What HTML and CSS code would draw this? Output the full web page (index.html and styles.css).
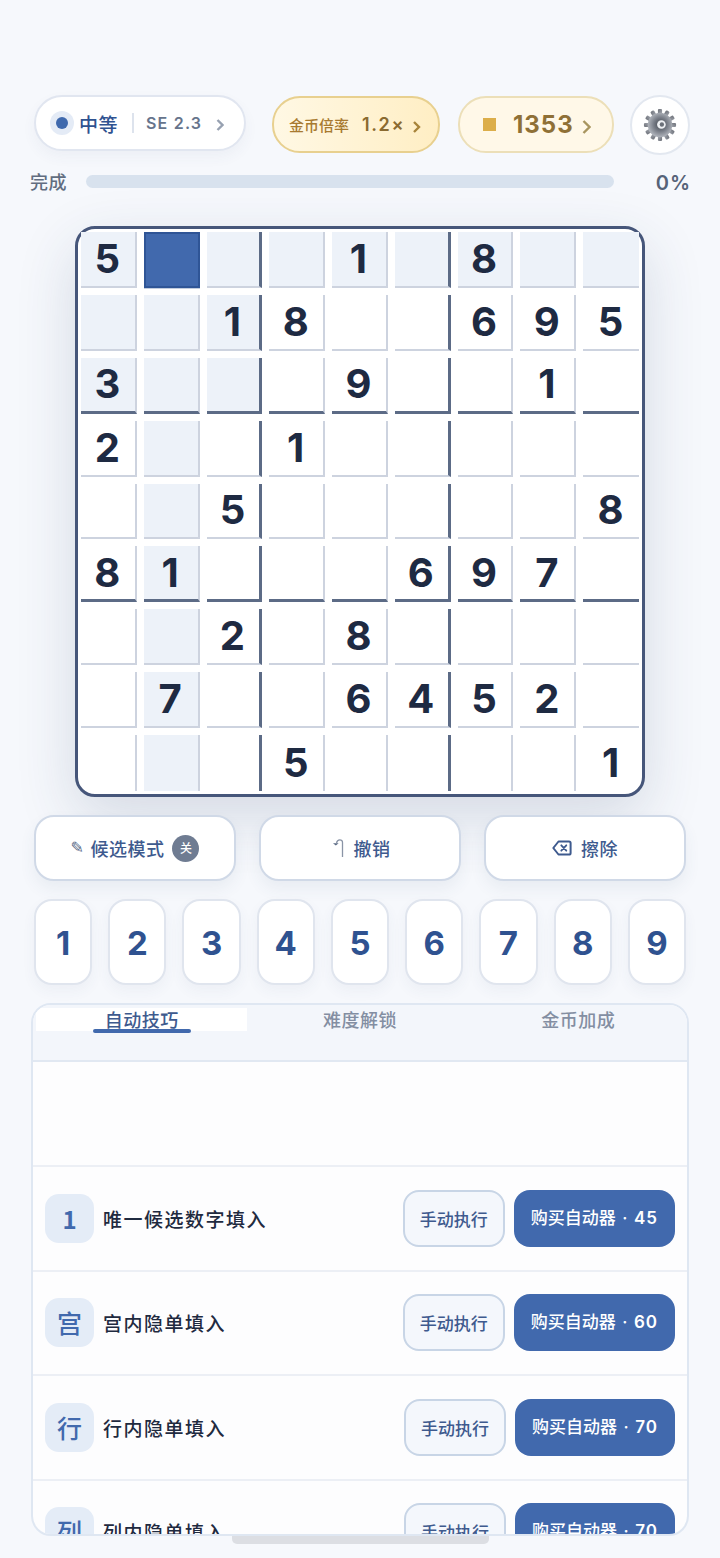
FILE: index.html
```html
<!DOCTYPE html>
<html lang="zh">
<head>
<meta charset="utf-8">
<title>数独</title>
<link rel="stylesheet" href="styles.css">
</head>
<body>
<div class="app">
  <header class="top">
    <div class="diff">
      <span class="diff-dot"></span>
      <span class="diff-name">中等</span>
      <span class="diff-sep"></span>
      <span class="diff-se">SE 2.3</span>
      <svg class="chev chev-gray" width="8" height="12" viewBox="0 0 8 12"><path d="M1.500 1l5 5-5 5"/></svg>
    </div>
    <div class="rate">
      <span class="rate-label">金币倍率</span>
      <span class="rate-val">1.2×</span>
      <svg class="chev chev-gold" width="9" height="12" viewBox="0 0 9 12"><path d="M2 1l5 5-5 5"/></svg>
    </div>
    <div class="coins">
      <span class="coin-sq"></span>
      <span class="coin-val">1353</span>
      <svg class="chev chev-tan" width="9" height="14" viewBox="0 0 9 14"><path d="M1.500 1l6 6-6 6"/></svg>
    </div>
    <div class="gear">
      <svg width="34" height="34" viewBox="0 0 36 36">
        <defs>
          <radialGradient id="g1" cx="52%" cy="48%" r="55%">
            <stop offset="0" stop-color="#3f444c"/>
            <stop offset=".5" stop-color="#777c86"/>
            <stop offset="1" stop-color="#b8bcc3"/>
          </radialGradient>
          <linearGradient id="g2" x1="0" y1="0" x2="1" y2="1">
            <stop offset="0" stop-color="#6c7078"/>
            <stop offset="1" stop-color="#a4a8b0"/>
          </linearGradient>
        </defs>
        <g fill="url(#g2)">
          <rect x="15.800" y="1" width="4.400" height="6" rx="1.200" transform="rotate(0 18 18)"/>
          <rect x="15.800" y="1" width="4.400" height="6" rx="1.200" transform="rotate(30 18 18)"/>
          <rect x="15.800" y="1" width="4.400" height="6" rx="1.200" transform="rotate(60 18 18)"/>
          <rect x="15.800" y="1" width="4.400" height="6" rx="1.200" transform="rotate(90 18 18)"/>
          <rect x="15.800" y="1" width="4.400" height="6" rx="1.200" transform="rotate(120 18 18)"/>
          <rect x="15.800" y="1" width="4.400" height="6" rx="1.200" transform="rotate(150 18 18)"/>
          <rect x="15.800" y="1" width="4.400" height="6" rx="1.200" transform="rotate(180 18 18)"/>
          <rect x="15.800" y="1" width="4.400" height="6" rx="1.200" transform="rotate(210 18 18)"/>
          <rect x="15.800" y="1" width="4.400" height="6" rx="1.200" transform="rotate(240 18 18)"/>
          <rect x="15.800" y="1" width="4.400" height="6" rx="1.200" transform="rotate(270 18 18)"/>
          <rect x="15.800" y="1" width="4.400" height="6" rx="1.200" transform="rotate(300 18 18)"/>
          <rect x="15.800" y="1" width="4.400" height="6" rx="1.200" transform="rotate(330 18 18)"/>
        </g>
        <circle cx="18" cy="18" r="13" fill="url(#g1)"/>
        <circle cx="19.500" cy="17.500" r="4.600" fill="#eef0f3"/>
        <circle cx="20" cy="17.500" r="2.300" fill="#6a6f78"/>
      </svg>
    </div>
  </header>

  <div class="progress">
    <span class="progress-label">完成</span>
    <div class="progress-track"></div>
    <span class="progress-val">0%</span>
  </div>

  <main class="board">
    <div class="cell hl">5</div><div class="cell sel"></div><div class="cell hl br"></div><div class="cell hl"></div><div class="cell hl">1</div><div class="cell hl br"></div><div class="cell hl">8</div><div class="cell hl"></div><div class="cell hl"></div>
    <div class="cell hl"></div><div class="cell hl"></div><div class="cell hl br">1</div><div class="cell">8</div><div class="cell"></div><div class="cell br"></div><div class="cell">6</div><div class="cell">9</div><div class="cell">5</div>
    <div class="cell hl bb">3</div><div class="cell hl bb"></div><div class="cell hl br bb"></div><div class="cell bb"></div><div class="cell bb">9</div><div class="cell br bb"></div><div class="cell bb"></div><div class="cell bb">1</div><div class="cell bb"></div>
    <div class="cell">2</div><div class="cell hl"></div><div class="cell br"></div><div class="cell">1</div><div class="cell"></div><div class="cell br"></div><div class="cell"></div><div class="cell"></div><div class="cell"></div>
    <div class="cell"></div><div class="cell hl"></div><div class="cell br">5</div><div class="cell"></div><div class="cell"></div><div class="cell br"></div><div class="cell"></div><div class="cell"></div><div class="cell">8</div>
    <div class="cell bb">8</div><div class="cell hl bb">1</div><div class="cell br bb"></div><div class="cell bb"></div><div class="cell bb"></div><div class="cell br bb">6</div><div class="cell bb">9</div><div class="cell bb">7</div><div class="cell bb"></div>
    <div class="cell"></div><div class="cell hl"></div><div class="cell br">2</div><div class="cell"></div><div class="cell">8</div><div class="cell br"></div><div class="cell"></div><div class="cell"></div><div class="cell"></div>
    <div class="cell"></div><div class="cell hl">7</div><div class="cell br"></div><div class="cell"></div><div class="cell">6</div><div class="cell br">4</div><div class="cell">5</div><div class="cell">2</div><div class="cell"></div>
    <div class="cell"></div><div class="cell hl"></div><div class="cell br"></div><div class="cell">5</div><div class="cell"></div><div class="cell br"></div><div class="cell"></div><div class="cell"></div><div class="cell">1</div>
  </main>

  <div class="actions">
    <button class="act"><span class="pencil">✎</span>候选模式<span class="badge">关</span></button>
    <button class="act">
      <svg class="ico-undo" width="14" height="20" viewBox="0 0 14 20"><path d="M12.500 19V4.500C12.500 2.800 11.400 1.800 9.800 1.800 8 1.800 6.900 3 6.500 5" fill="none" stroke="#8a94a6" stroke-width="1.300"/><path d="M3 5.200h5.600L5.800 7.600z" fill="#5a6a84"/></svg>撤销</button>
    <button class="act">
      <svg class="ico-erase" width="20" height="16" viewBox="0 0 20 16"><path d="M6.500 1.500H17a1.600 1.600 0 0 1 1.600 1.600v9.800A1.600 1.600 0 0 1 17 14.500H6.500L1.300 8z" fill="none" stroke="#3e5a8e" stroke-width="2" stroke-linejoin="round"/><path d="M9.300 5.300l5 5.400M14.300 5.300l-5 5.400" stroke="#3e5a8e" stroke-width="1.800" stroke-linecap="round"/></svg>擦除</button>
  </div>

  <div class="pad">
    <button class="key">1</button><button class="key">2</button><button class="key">3</button><button class="key">4</button><button class="key">5</button><button class="key">6</button><button class="key">7</button><button class="key">8</button><button class="key">9</button>
  </div>

  <section class="panel">
    <nav class="tabs">
      <div class="tab tab-on">自动技巧</div>
      <div class="tab">难度解锁</div>
      <div class="tab">金币加成</div>
    </nav>
    <div class="spacer"></div>
    <div class="row">
      <span class="row-ico row-ico-num">1</span><span class="row-name">唯一候选数字填入</span>
      <button class="btn-man">手动执行</button><button class="btn-buy">购买自动器 · <b class="price">45</b></button>
    </div>
    <div class="row">
      <span class="row-ico">宫</span><span class="row-name">宫内隐单填入</span>
      <button class="btn-man">手动执行</button><button class="btn-buy">购买自动器 · <b class="price">60</b></button>
    </div>
    <div class="row">
      <span class="row-ico">行</span><span class="row-name">行内隐单填入</span>
      <button class="btn-man">手动执行</button><button class="btn-buy">购买自动器 · <b class="price">70</b></button>
    </div>
    <div class="row">
      <span class="row-ico">列</span><span class="row-name">列内隐单填入</span>
      <button class="btn-man">手动执行</button><button class="btn-buy">购买自动器 · <b class="price">70</b></button>
    </div>
  </section>
  <div class="scrollbar"></div>
</div>
</body>
</html>
```

FILE: styles.css
```css
* { box-sizing: border-box; }
html, body { margin: 0; padding: 0; height: 100%; }
body {
  background: #f6f8fc;
  font-family: Inter, "Noto Sans CJK SC", sans-serif;
  overflow: hidden;
}
button { font-family: inherit; padding: 0; margin: 0; cursor: pointer; }
.app { position: relative; width: 720px; height: 1558px; padding: 95px 34px 0; }

.top { display: flex; align-items: flex-start; height: 59px; }
.chev { flex: none; fill: none; stroke-width: 2.400; margin-top: 4px; }
.chev path { stroke: currentColor; }
.diff {
  width: 212px; height: 56px; border-radius: 28px; flex: none;
  background: #fff; border: 2px solid #e1e6f0;
  box-shadow: 0 6px 14px rgba(60, 80, 120, .05);
  display: flex; align-items: center; padding-left: 14px;
}
.diff-dot {
  width: 24px; height: 24px; border-radius: 50%; flex: none;
  background: #e4ebf6; display: flex; align-items: center; justify-content: center;
}
.diff-dot::after { content: ""; width: 12px; height: 12px; border-radius: 50%; background: #3f69ad; }
.diff-name { margin-left: 5px; font: 500 19px/1 "Noto Sans CJK SC", sans-serif; letter-spacing: .5px; color: #2f5290; }
.diff-sep { width: 2px; height: 20px; background: #dde3ed; margin-left: 14px; }
.diff-se { margin-left: 12px; font-size: 16px; font-weight: 600; letter-spacing: 1.200px; color: #66748c; }
.chev-gray { margin-left: 14px; color: #97a1b1; }

.rate {
  width: 168px; height: 57px; border-radius: 28px; flex: none; margin: 1px 0 0 26px;
  background: linear-gradient(90deg, #fff8e4, #ffeec4);
  border: 2px solid #e8d08f;
  display: flex; align-items: center; padding-left: 15px;
}
.rate-label { font: 500 15px/1 "Noto Sans CJK SC", sans-serif; color: #a87a30; }
.rate-val { margin-left: 13px; font-size: 18px; font-weight: 600; letter-spacing: 1.600px; color: #8a6a30; }
.chev-gold { margin-left: 7px; color: #a8843a; }

.coins {
  width: 156px; height: 57px; border-radius: 28px; flex: none; margin: 1px 0 0 18px;
  background: #fff8e8; border: 2px solid #ecdfb8;
  display: flex; align-items: center; padding-left: 23px;
}
.coin-sq { width: 13px; height: 13px; background: #dcae4a; flex: none; }
.coin-val { margin-left: 17px; font-size: 24px; font-weight: 700; letter-spacing: 1px; color: #8f7036; }
.chev-tan { margin-left: 8px; color: #a8955f; }

.gear {
  width: 60px; height: 60px; border-radius: 50%; flex: none; margin-left: 16px;
  background: #fff; border: 2px solid #e3e8f0;
  display: flex; align-items: center; justify-content: center;
}

.progress { display: flex; align-items: center; height: 13px; margin: 21px -4px 0; }
.progress-label { width: 52px; font: 500 18px/1 "Noto Sans CJK SC", sans-serif; letter-spacing: .5px; color: #616d80; flex: none; margin-right: 4px; position: relative; top: -1px; }
.progress-track { width: 528px; height: 13px; border-radius: 7px; background: #d8e2ee; flex: none; }
.progress-val { flex: 1; text-align: right; font-size: 20px; font-weight: 600; letter-spacing: 1px; margin-right: -1px; padding-top: 2px; color: #566378; }

.board {
  width: 570px; height: 571px; margin: 38px auto 0;
  background: #fff; border: 3px solid #46567a; border-radius: 20px;
  padding: 3px;
  box-shadow: 0 20px 60px rgba(40, 60, 100, .16);
  display: grid; gap: 7px;
  grid-template-columns: repeat(9, 1fr);
  grid-template-rows: repeat(9, 1fr);
}
.cell {
  border-right: 2px solid #cdd3df; border-bottom: 2px solid #cdd3df;
  display: flex; align-items: center; justify-content: center;
  font-size: 40px; font-weight: 700; line-height: 1; color: #1e2a42;
  min-width: 0; min-height: 0;
  padding-right: 1px;
}
.cell:nth-child(9n) { border-right: 0; }
.cell:nth-last-child(-n+9) { border-bottom: 0; }
.hl { background: #edf2f9; }
.br { border-right: 3px solid #5c6b86; }
.bb { border-bottom: 3px solid #5c6b86; }
.sel { background: #4169ad; border: 2px solid #2f5596; box-shadow: 0 1px 0 #c3cdde; }

.actions { display: grid; grid-template-columns: repeat(3, 1fr); column-gap: 23px; margin-top: 18px; }
.act {
  height: 66px; border-radius: 20px; background: #fff; border: 2px solid #d0d9e7;
  box-shadow: 0 8px 16px rgba(60, 80, 120, .07);
  display: flex; align-items: center; justify-content: center;
  font: 500 18px/1 "Noto Sans CJK SC", sans-serif; color: #3e5a8e; letter-spacing: .5px;
}
.pencil { font: 16px/1 "DejaVu Sans", sans-serif; color: #5a6a88; margin-right: 6px; }
.badge {
  width: 27px; height: 27px; border-radius: 50%; background: #6f7c92; color: #fff;
  font-size: 12px; display: flex; align-items: center; justify-content: center; margin-left: 8px; letter-spacing: 0;
}
.ico-undo { margin-right: 10px; }
.ico-erase { margin-right: 9px; }

.pad { display: grid; grid-template-columns: repeat(9, 58.200px); justify-content: space-between; margin-top: 18px; }
.key {
  height: 86px; border-radius: 18px; background: #fff; border: 2px solid #e0e5ee;
  box-shadow: 0 6px 14px rgba(60, 80, 120, .05);
  font-size: 33px; font-weight: 650; color: #2f5290; padding-top: 1px;
}

.panel {
  margin: 18px -3px 0; height: 533px; border-radius: 20px; overflow: hidden;
  background: #fdfdfe; border: 2px solid #dfe7f2;
}
.tabs {
  height: 57px; background: #f3f6fb; border-bottom: 2px solid #e1e8f2;
  display: grid; grid-template-columns: repeat(3, 1fr); column-gap: 7px;
  padding: 3px 3px 0; align-items: start;
}
.tab {
  position: relative; height: 23px; text-align: center;
  font: 500 18px/22px "Noto Sans CJK SC", sans-serif; letter-spacing: .5px; color: #838ea2;
}
.tab-on { background: #fff; color: #3e5a8e; }
.tab-on::after {
  content: ""; position: absolute; left: 57px; bottom: -2px; width: 98px; height: 4px;
  border-radius: 2px; background: #4169ad;
}
.spacer { height: 105.400px; border-bottom: 2px solid #eceff5; }
.row {
  height: 104.400px; border-bottom: 2px solid #eceff5;
  display: flex; align-items: center; padding: 0 12px;
}
.row-ico {
  width: 49px; height: 49px; border-radius: 14px; background: #e4ecf7; color: #4169ad; flex: none;
  display: flex; align-items: center; justify-content: center;
  font: 500 25px/1 "Noto Sans CJK SC", sans-serif;
}
.row-ico-num { font-weight: 700; font-size: 24px; }
.row-name { flex: 1; margin-left: 9px; font: 500 19px/1 "Noto Sans CJK SC", sans-serif; letter-spacing: 1.500px; color: #1f2a40; }
.btn-man {
  width: 102px; height: 57px; border-radius: 16px; background: #f4f7fc; border: 2px solid #c8d5e6; flex: none;
  font: 500 17px/1 "Noto Sans CJK SC", sans-serif; color: #3e5a8e;
}
.btn-buy {
  height: 57px; padding: 0 17px; margin-left: 9px; border-radius: 16px; background: #4169ad; border: 0; flex: none;
  font: 500 17px/1 Inter, "Noto Sans CJK SC", sans-serif; color: #fff; word-spacing: 2px;
}
.price { font-weight: 600; letter-spacing: 1px; }
.scrollbar {
  position: absolute; left: 232px; top: 1536px; width: 257px; height: 8px;
  background: #dcdee3; border-radius: 0 0 5px 5px;
}
```
